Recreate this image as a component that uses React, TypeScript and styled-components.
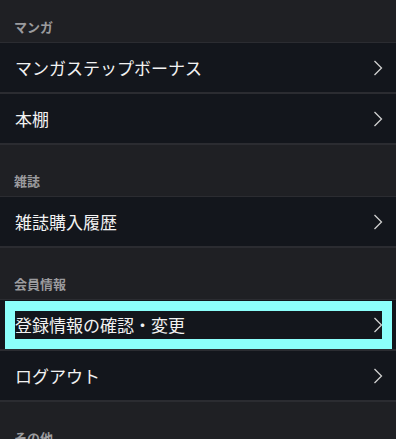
import styled, { createGlobalStyle } from "styled-components";

const GlobalStyle = createGlobalStyle`
    body{
        margin:0;
        background:#1f2024;
        font-family:"Noto Sans CJK JP", "Noto Sans", sans-serif;
    }
`

const sections = [
    { title: 'マンガ', items: ['マンガステップボーナス', '本棚'] },
    { title: '雑誌', items: ['雑誌購入履歴'] },
    { title: '会員情報', items: ['登録情報の確認・変更', 'ログアウト'] },
    { title: 'その他', items: [] as string[] },
]

const Chevron = () =>
    <svg width="10" height="16" viewBox="0 0 10 16">
        <polyline points="1.5,1 8.5,8 1.5,15" fill="none" stroke="#d0d0d0" strokeWidth="1.3"/>
    </svg>

export default function App() {
    return <Page>
        <GlobalStyle/>
        {sections.map((section, i) =>
            <section key={section.title}>
                <SectionHeader $first={i === 0}>{section.title}</SectionHeader>
                {section.items.length > 0 &&
                    <List>
                        {section.items.map(item =>
                            <Row key={item}>
                                <RowLink href="#" $focused={item === '登録情報の確認・変更'}>
                                    <span>{item}</span>
                                    <Chevron/>
                                </RowLink>
                            </Row>
                        )}
                    </List>
                }
            </section>
        )}
    </Page>
}

const Page = styled.div`
    background:#1f2024;
    min-height:439px;
`

const SectionHeader = styled.h2<{ $first?: boolean }>`
    display:flex;
    align-items:flex-end;
    box-sizing:border-box;
    height:${p => p.$first ? '42px' : '51px'};
    margin:0;
    padding:0 15px 6px 14px;
    font-size:13px;
    line-height:18px;
    font-weight:600;
    color:#9b9b9e;
`

const List = styled.ul`
    list-style:none;
    margin:0;
    padding:0;
    border-top:1px solid #2b2c31;
`

const Row = styled.li`
    display:flex;
    align-items:center;
    box-sizing:border-box;
    height:51px;
    padding:0 14px 0 15px;
    background:#13161c;
    border-bottom:2px solid #2b2c31;
`

const RowLink = styled.a<{ $focused?: boolean }>`
    display:flex;
    justify-content:space-between;
    align-items:center;
    width:100%;
    height:28px;
    color:#f2f2f2;
    text-decoration:none;
    font-size:17px;
    font-weight:400;
    line-height:28px;
    outline:${p => p.$focused ? '10px solid #8cfffb' : 'none'};
    background:#13161c;
    svg{
        margin-right:-1px;
    }
`
